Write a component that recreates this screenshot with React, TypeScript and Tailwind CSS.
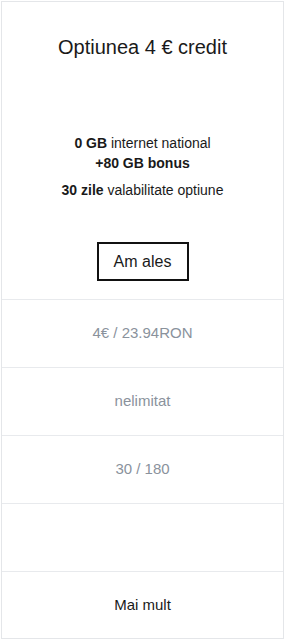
export default function App() {
  const rows = ["4€ / 23.94RON", "nelimitat", "30 / 180", ""];

  return (
    <div className="w-[286px] h-[641px] bg-white p-px font-['Helvetica','Liberation_Sans',Arial,sans-serif]">
      <div className="h-[638px] w-[283px] border border-[#e4e6e9] flex flex-col text-[#1a1a1a]">
        {/* Header */}
        <div className="h-[297px] flex flex-col items-center">
          <h2 className="mt-[32px] text-[20px] leading-[26px] font-medium">
            Optiunea 4 € credit
          </h2>
          <div className="mt-[73px] flex flex-col items-center text-[14px] leading-[20px]">
            <p>
              <b className="font-bold">0 GB</b> internet national
            </p>
            <p className="font-bold">+80 GB bonus</p>
            <p className="mt-[7px]">
              <b className="font-bold">30 zile</b> valabilitate optiune
            </p>
          </div>
          <button className="mt-[42px] w-[92px] h-[39px] border-2 border-[#111] text-[16px] font-medium">
            Am ales
          </button>
        </div>

        {/* Rows */}
        {rows.map((r, i) => (
          <div
            key={i}
            className="h-[68px] border-t border-[#e8eaed] flex items-center justify-center text-[15px] text-[#8a929c]"
          >
            {r}
          </div>
        ))}

        <div className="flex-1 border-t border-[#e8eaed] flex items-center justify-center text-[15px] font-medium">
          Mai mult
        </div>
      </div>
    </div>
  );
}
